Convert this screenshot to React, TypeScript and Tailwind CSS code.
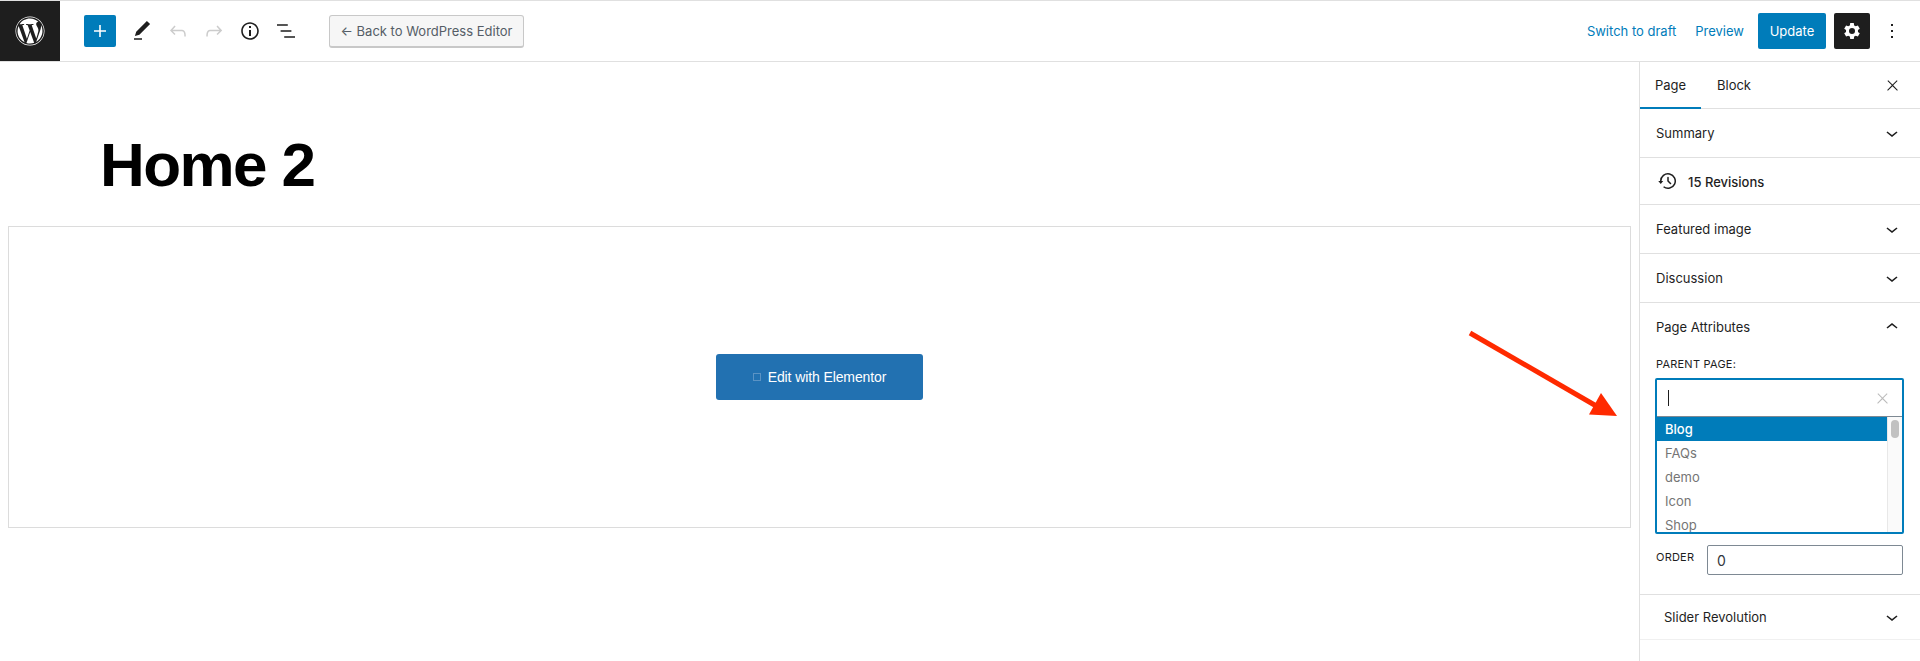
import { FaWordpress } from "react-icons/fa";

function Icon({ d, className = "" }: { d: string; className?: string }) {
  return (
    <svg viewBox="0 0 24 24" className={`w-6 h-6 fill-current shrink-0 ${className}`} aria-hidden="true">
      <path d={d} />
    </svg>
  );
}

const paths = {
  plus: "M18 11.2h-5.2V6h-1.6v5.2H6v1.6h5.2V18h1.6v-5.2H18z",
  pencil: "M20.1 5.1L16.9 2 6.2 12.7l-1.3 4.4 4.5-1.3L20.1 5.1zM4 20.8h8v-1.5H4v1.5z",
  undo: "M18.3 11.7c-.6-.6-1.4-.9-2.3-.9H6.7l2.9-3.3-1.1-1-4.5 5L8.5 16l1-1-2.7-2.7H16c.5 0 .9.2 1.3.5 1 1 1 3.4 1 4.5v.3h1.5v-.2c0-1.5 0-4.3-1.5-5.7z",
  redo: "M15.6 6.5l-1.1 1 2.9 3.3H8c-.9 0-1.7.3-2.3.9-1.4 1.5-1.4 4.2-1.4 5.6v.2h1.5v-.3c0-1.1 0-3.5 1-4.5.3-.3.7-.5 1.3-.5h9.2L14.5 15l1.1 1.1 4.6-4.6-4.6-5z",
  info: "M12 3.2c-4.8 0-8.8 3.9-8.8 8.8 0 4.8 3.9 8.8 8.8 8.8 4.8 0 8.8-3.9 8.8-8.8 0-4.8-4-8.8-8.8-8.8zm0 16c-4 0-7.2-3.3-7.2-7.2C4.8 8 8 4.8 12 4.8s7.2 3.3 7.2 7.2c0 4-3.2 7.2-7.2 7.2zM11 17h2v-6h-2v6zm0-8h2V7h-2v2z",
  list: "M13.8 5.2H3v1.5h10.8V5.2zm-3.6 12v1.5H21v-1.5H10.2zm7.2-6H6.6v1.5h10.8v-1.5z",
  cog: "M18 12c0-.3 0-.6-.1-.9l1.9-1.4-1.9-3.3-2.2.9c-.5-.4-1-.7-1.6-.9L13.8 4h-3.6l-.3 2.4c-.6.2-1.1.5-1.6.9l-2.2-.9-1.9 3.3 1.9 1.4c0 .3-.1.6-.1.9s0 .6.1.9l-1.9 1.4 1.9 3.3 2.2-.9c.5.4 1 .7 1.6.9l.3 2.4h3.6l.3-2.4c.6-.2 1.1-.5 1.6-.9l2.2.9 1.9-3.3-1.9-1.4c.1-.3.1-.6.1-.9zm-6 3a3 3 0 110-6 3 3 0 010 6z",
  more: "M13 19h-2v-2h2v2zm0-6h-2v-2h2v2zm0-6h-2V5h2v2z",
  close: "M13 11.8l6.1-6.3-1-1-6.1 6.2-6.1-6.2-1 1 6.1 6.3-6.5 6.7 1 1 6.5-6.6 6.5 6.6 1-1z",
  down: "M17.5 11.6L12 16l-5.5-4.4.9-1.2L12 14l4.5-3.6 1 1.2z",
  up: "M6.5 12.4L12 8l5.5 4.4-.9 1.2L12 10l-4.5 3.6-1-1.2z",
  backup: "M5.5 12h1.75l-2.5 3-2.5-3H4a8 8 0 113.134 6.35l.907-1.194A6.5 6.5 0 105.5 12zm9.53 1.97l-2.28-2.28V8.5a.75.75 0 00-1.5 0V12c0 .2.08.39.22.53l2.5 2.5a.75.75 0 101.06-1.06z",
};

function Panel({ title, height }: { title: string; height: string }) {
  return (
    <div className={`flex items-center justify-between pl-4 pr-4 border-b border-[#e0e0e0] ${height}`}>
      <span className="pt-[2px]">{title}</span>
      <Icon d={paths.down} />
    </div>
  );
}

export default function App() {
  const pages = ["FAQs", "demo", "Icon", "Shop"];

  return (
    <div className="h-[661px] overflow-hidden bg-white relative flex flex-col font-['Inter',sans-serif] text-[13px] text-[#1e1e1e]">
      {/* Top bar */}
      <header className="h-[62px] shrink-0 border-y border-[#e0e0e0] flex items-center">
        <div className="w-[60px] h-full bg-[#1e1e1e] text-white flex items-center justify-center">
          <FaWordpress className="w-[30px] h-[30px]" />
        </div>
        <div className="w-8 h-8 ml-6 bg-[#007cba] rounded-[2px] text-white flex items-center justify-center">
          <Icon d={paths.plus} />
        </div>
        <Icon d={paths.pencil} className="ml-[14px]" />
        <Icon d={paths.undo} className="ml-3 text-[#cccccc]" />
        <Icon d={paths.redo} className="ml-3 text-[#cccccc]" />
        <Icon d={paths.info} className="ml-3" />
        <Icon d={paths.list} className="ml-3" />
        <button className="ml-[31px] w-[195px] h-[33px] bg-[#f6f6f6] border border-[#c8c8c8] border-b-2 rounded-[3px] text-[#555d66] text-[13px] flex items-center justify-center pt-[2px]">
          ← Back to WordPress Editor
        </button>
        <div className="ml-auto flex items-center">
          <span className="text-[#007cba] pt-[2px]">Switch to draft</span>
          <span className="ml-[19px] text-[#007cba] pt-[2px]">Preview</span>
          <button className="ml-[14px] w-[68px] h-9 bg-[#007cba] text-white rounded-[2px] pt-[2px]">Update</button>
          <div className="ml-2 w-9 h-9 bg-[#1e1e1e] text-white rounded-[2px] flex items-center justify-center">
            <Icon d={paths.cog} />
          </div>
          <Icon d={paths.more} className="ml-[10px] mr-4" />
        </div>
      </header>

      <div className="flex-1 flex min-h-0">
        {/* Editor canvas */}
        <main className="flex-1 min-w-0 pl-2 pr-2">
          <h1 className="pl-[92px] pt-[67px] h-[164px] font-['Liberation_Sans',sans-serif] font-bold text-[62px] leading-[72px] tracking-[-1.6px] text-black">
            Home 2
          </h1>
          <div className="h-[302px] border border-[#dcdcdc] flex items-center justify-center">
            <button className="w-[207px] h-[46px] bg-[#2271b1] rounded-[3px] text-white font-['Liberation_Sans',sans-serif] text-[14px] tracking-[-0.1px] flex items-center justify-center gap-[7px]">
              <span className="w-2 h-2 border border-[#5b93c4]" />
              Edit with Elementor
            </button>
          </div>
        </main>

        {/* Settings sidebar */}
        <aside className="w-[281px] shrink-0 border-l border-[#e0e0e0]">
          <div className="h-[47px] flex items-stretch border-b border-[#e0e0e0]">
            <div className="w-[61px] flex items-center justify-center border-b-2 border-[#007cba] h-[47px] pt-[2px]">Page</div>
            <div className="w-[66px] flex items-center justify-center pt-[2px]">Block</div>
            <Icon d={paths.close} className="w-[17px] h-[17px] ml-auto mr-[19px] self-center" />
          </div>
          <Panel title="Summary" height="h-[49px]" />
          <div className="h-[47px] flex items-center pl-4 border-b border-[#e0e0e0] font-medium">
            <Icon d={paths.backup} />
            <span className="ml-[8px] pt-1">15 Revisions</span>
          </div>
          <Panel title="Featured image" height="h-[49px]" />
          <Panel title="Discussion" height="h-[49px]" />
          <div className="h-[292px] border-b border-[#e0e0e0] px-4">
            <div className="h-[48px] flex items-center justify-between">
              <span className="pt-[2px]">Page Attributes</span>
              <Icon d={paths.up} />
            </div>
            <div className="mt-[5px] text-[11px] leading-4 tracking-[0.02em]">PARENT PAGE:</div>
            <div className="mt-[6px] h-[156px] w-[249px] -ml-px border-2 border-[#007cba] rounded-[2px] overflow-hidden">
              <div className="h-[37px] border-b border-[#7e8993] flex items-center justify-between pl-[11px] pr-[11px]">
                <span className="w-px h-4 bg-[#1e1e1e]" />
                <Icon d={paths.close} className="w-[17px] h-[17px] text-[#bbbbbb]" />
              </div>
              <div className="flex">
                <div className="flex-1 min-w-0">
                  <div className="h-6 bg-[#007cba] text-white font-medium pl-2 flex items-center pt-px">Blog</div>
                  {pages.map((page) => (
                    <div key={page} className="h-6 pl-2 flex items-center text-[#757575] pt-px">{page}</div>
                  ))}
                </div>
                <div className="w-[15px] bg-[#fafafa] border-l border-[#e8e8e8] pt-[3px] flex justify-center h-[120px]">
                  <div className="w-2 h-[18px] rounded-full bg-[#c1c1c1]" />
                </div>
              </div>
            </div>
            <div className="mt-[11px] flex items-center">
              <span className="w-[51px] -mt-[6px] text-[11px] tracking-[0.02em]">ORDER</span>
              <div className="w-[196px] h-[30px] border border-[#7e8993] rounded-[2px] flex items-center pl-[9px] text-[14px] text-[#32373c]">0</div>
            </div>
          </div>
          <div className="h-[45px] flex items-center justify-between pl-6 pr-4 border-b border-[#f0f0f0]">
            <span className="pt-[2px]">Slider Revolution</span>
            <Icon d={paths.down} />
          </div>
        </aside>
      </div>

      {/* Annotation arrow */}
      <svg viewBox="0 0 1920 661" className="absolute inset-0 w-[1920px] h-[661px] pointer-events-none" aria-hidden="true">
        <path d="M1470 333L1598 407" stroke="#ff2a00" strokeWidth="5" fill="none" />
        <path d="M1601 393L1589 414.5L1617 416z" fill="#ff2a00" />
      </svg>
    </div>
  );
}
